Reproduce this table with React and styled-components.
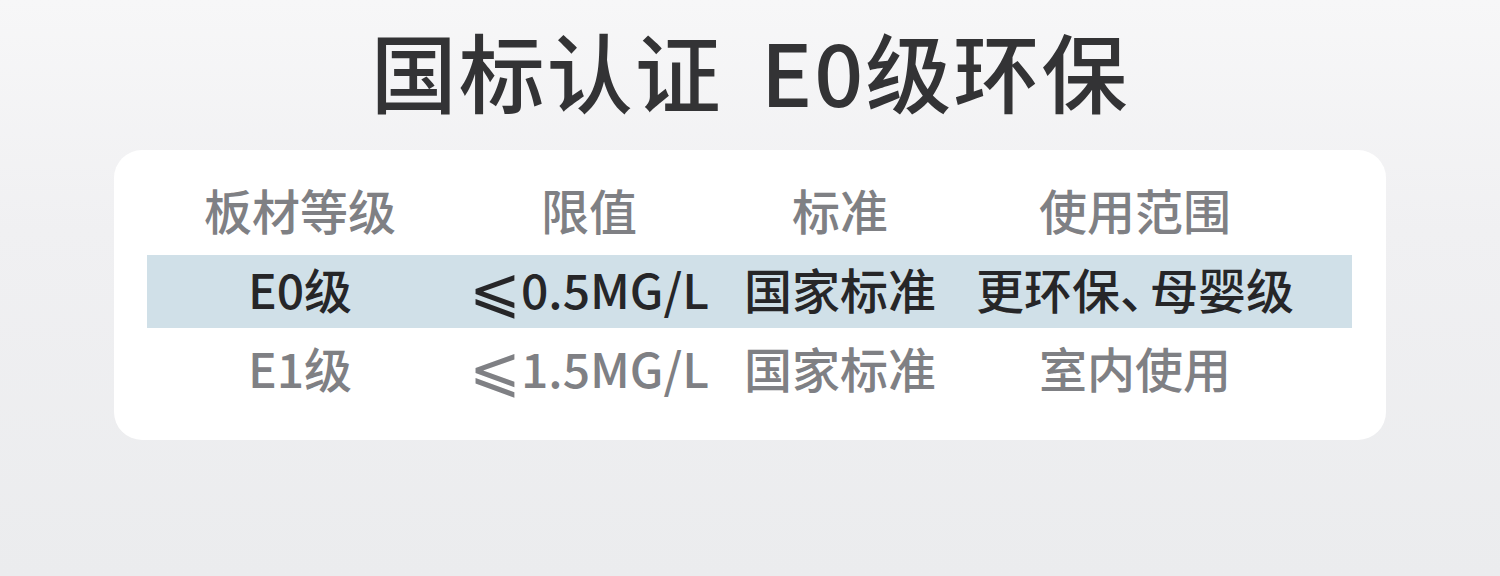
import React from "react";
import styled, { createGlobalStyle } from "styled-components";

const Global = createGlobalStyle`
  html, body { margin: 0; padding: 0; }
  body {
    font-family: "Noto Sans CJK SC", "Noto Sans", sans-serif;
    background: #eeeef0;
  }
`;

const Page = styled.div`
  width: 1500px;
  height: 576px;
  background: linear-gradient(180deg, #f7f7f8 0%, #f0f0f2 40%, #ebecee 100%);
  display: flex;
  flex-direction: column;
  align-items: center;
`;

const Title = styled.h1`
  margin: 0;
  height: 150px;
  box-sizing: border-box;
  padding-bottom: 12px;
  display: flex;
  align-items: center;
  font-size: 86px;
  font-weight: 500;
  color: #333335;
  letter-spacing: 2px;
  white-space: pre;
`;

const TitleGap = styled.span`
  display: inline-block;
  width: 38px;
`;

const Card = styled.div`
  width: 1272px;
  box-sizing: border-box;
  background: #ffffff;
  border-radius: 28px;
  padding: 26px 34px 33px 33px;
  display: flex;
  flex-direction: column;
  gap: 6px;
`;

const Row = styled.div`
  display: grid;
  grid-template-columns: 306px 272px 230px 360px;
  height: 73px;
  align-items: center;
  background: ${(p) => (p.$highlight ? "#d0e0e8" : "transparent")};
  color: ${(p) => (p.$highlight ? "#262628" : "#7f8084")};
`;

const Cell = styled.div`
  text-align: center;
  font-size: 48px;
  font-weight: 500;
  line-height: 1;
  padding-bottom: 8px;
  white-space: nowrap;
`;

const Le = styled.span`
  font-family: "DejaVu Sans", sans-serif;
  font-weight: 200;
  font-size: 62px;
  line-height: 0;
  vertical-align: -2px;
`;

const Punct = styled.span`
  font-feature-settings: "halt" 1;
  margin-right: 0.12em;
`;

const rows = [
  { cells: ["板材等级", "限值", "标准", "使用范围"] },
  { cells: ["E0级", "0.5MG/L", "国家标准", ["更环保", "母婴级"]], le: true, highlight: true },
  { cells: ["E1级", "1.5MG/L", "国家标准", "室内使用"], le: true },
];

function renderCell(c) {
  if (Array.isArray(c)) {
    return (
      <>
        {c[0]}
        <Punct>、</Punct>
        {c[1]}
      </>
    );
  }
  return c;
}

export default function App() {
  return (
    <>
      <Global />
      <Page>
        <Title>
          国标认证<TitleGap />E0级环保
        </Title>
        <Card>
          {rows.map((r, i) => (
            <Row key={i} $highlight={r.highlight}>
              {r.cells.map((c, j) => (
                <Cell key={j}>
                  {r.le && j === 1 ? <Le>⩽</Le> : null}
                  {renderCell(c)}
                </Cell>
              ))}
            </Row>
          ))}
        </Card>
      </Page>
    </>
  );
}
